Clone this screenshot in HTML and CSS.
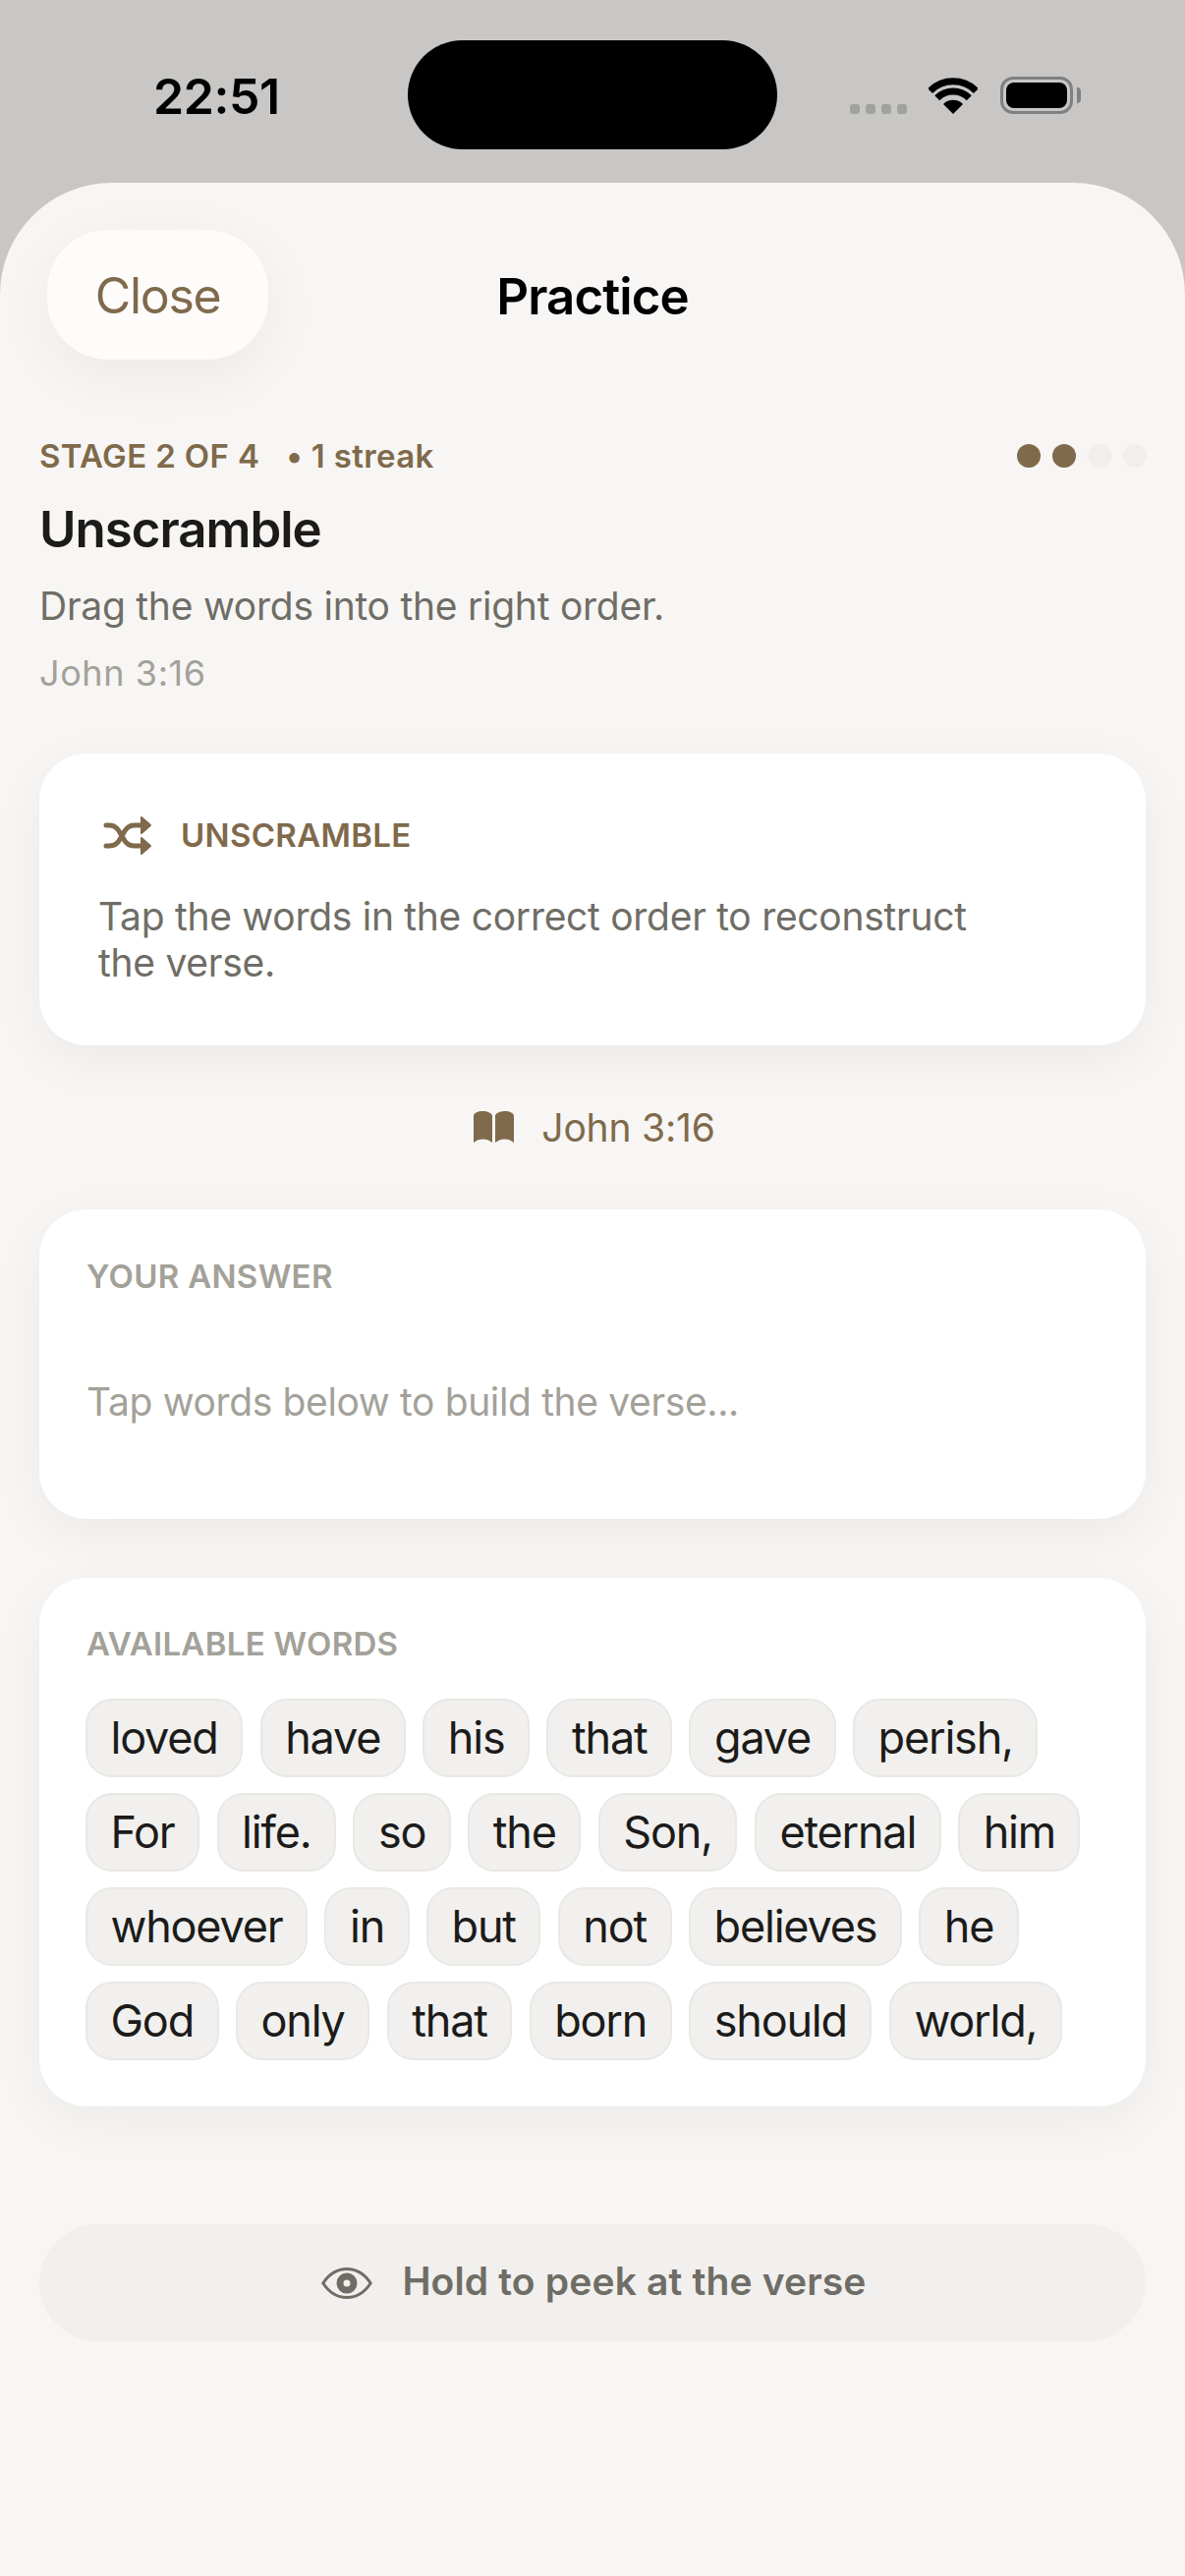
FILE: index.html
```html
<!DOCTYPE html>
<html lang="en">
<head>
  <meta charset="UTF-8">
  <meta name="viewport" content="width=device-width, initial-scale=1.0">
  <title>Practice</title>
  <link rel="stylesheet" href="styles.css">
</head>
<body>
  <div class="status-bar">
    <div class="time">22:51</div>
    <div class="island"></div>
    <div class="status-icons">
      <div class="signal"><span></span><span></span><span></span><span></span></div>
      <svg class="wifi" width="50" height="37" viewBox="0 0 50 37">
        <path d="M25 37 L15 27 A14 14 0 0 1 35 27 Z" fill="#000"/>
        <path d="M8.7 20.7 A23 23 0 0 1 41.3 20.7" fill="none" stroke="#000" stroke-width="7"/>
        <path d="M1.6 13.6 A33 33 0 0 1 48.4 13.6" fill="none" stroke="#000" stroke-width="7"/>
      </svg>
      <div class="battery"><div class="battery-fill"></div></div>
      <div class="battery-nub"></div>
    </div>
  </div>

  <div class="sheet">
    <div class="sheet-header">
      <button type="button" class="close-btn">Close</button>
      <div class="sheet-title">Practice</div>
    </div>

    <div class="content">
      <div class="stage-row">
        <div class="stage-label">STAGE 2 OF 4<span class="streak">• 1 streak</span></div>
        <div class="stage-dots">
          <span class="dot on"></span><span class="dot on"></span><span class="dot"></span><span class="dot"></span>
        </div>
      </div>
      <h1 class="title">Unscramble</h1>
      <p class="subtitle">Drag the words into the right order.</p>
      <p class="reference">John 3:16</p>

      <div class="card intro-card">
        <div class="intro-head">
          <svg class="shuffle" width="60" height="60" viewBox="0 0 60 60">
            <path d="M8 20 H11 C19 20 21 26 24 31 C27 36 29 41 37 41 H44" fill="none" stroke="#7f6a4b" stroke-width="5" stroke-linecap="round"/>
            <path d="M8 41 H11 C19 41 21 36 24 31 C27 26 29 20 37 20 H44" fill="none" stroke="#7f6a4b" stroke-width="5" stroke-linecap="round"/>
            <path d="M44 12 L53 20 L44 28 Z M44 33 L53 41 L44 49 Z" fill="#7f6a4b" stroke="#7f6a4b" stroke-width="2" stroke-linejoin="round"/>
          </svg>
          <span class="intro-label">UNSCRAMBLE</span>
        </div>
        <p class="intro-text">Tap the words in the correct order to reconstruct the verse.</p>
      </div>

      <div class="verse-ref">
        <svg width="41" height="32" viewBox="0 0 41 32">
          <path d="M0 5 C0 2 4 0 9.5 0 C14 0 19 2 19 5 V32 C16 29.5 13 28.5 9.5 28.5 C6 28.5 3 29.5 0 32 Z" fill="#7f6a4b"/>
          <path d="M41 5 C41 2 37 0 31.5 0 C27 0 22 2 22 5 V32 C25 29.5 28 28.5 31.5 28.5 C35 28.5 38 29.5 41 32 Z" fill="#7f6a4b"/>
        </svg>
        <span>John 3:16</span>
      </div>

      <div class="card answer-card">
        <div class="card-label">YOUR ANSWER</div>
        <p class="answer-hint">Tap words below to build the verse...</p>
      </div>

      <div class="card words-card">
        <div class="card-label">AVAILABLE WORDS</div>
        <div class="chips">
          <div class="chip-row">
            <span class="chip">loved</span><span class="chip">have</span><span class="chip">his</span><span class="chip">that</span><span class="chip">gave</span><span class="chip">perish,</span>
          </div>
          <div class="chip-row">
            <span class="chip">For</span><span class="chip">life.</span><span class="chip">so</span><span class="chip">the</span><span class="chip">Son,</span><span class="chip">eternal</span><span class="chip">him</span>
          </div>
          <div class="chip-row">
            <span class="chip">whoever</span><span class="chip">in</span><span class="chip">but</span><span class="chip">not</span><span class="chip">believes</span><span class="chip">he</span>
          </div>
          <div class="chip-row">
            <span class="chip">God</span><span class="chip">only</span><span class="chip">that</span><span class="chip">born</span><span class="chip">should</span><span class="chip">world,</span>
          </div>
        </div>
      </div>

      <button type="button" class="peek-btn">
        <svg width="52" height="32" viewBox="0 0 52 32">
          <path d="M1.8 16 C8 6.5 16 1.5 26 1.5 C36 1.5 44 6.5 50.2 16 C44 25.5 36 30.5 26 30.5 C16 30.5 8 25.5 1.8 16 Z" fill="none" stroke="#6f6d66" stroke-width="3"/>
          <circle cx="26" cy="16" r="7" fill="none" stroke="#6f6d66" stroke-width="7"/>
        </svg>
        <span>Hold to peek at the verse</span>
      </button>
    </div>
  </div>
</body>
</html>
```

FILE: styles.css
```css
* {
  box-sizing: border-box;
}
body {
  margin: 0;
  height: 2622px;
  display: flex;
  flex-direction: column;
  overflow: hidden;
  background-color: #c8c7c5;
  font-family: Inter, "Noto Sans", sans-serif;
  color: #1c1b1a;
}
h1, p {
  margin: 0;
}

/* status bar */
.status-bar {
  height: 186px;
  flex-shrink: 0;
  display: grid;
  grid-template-columns: 415px 376px 1fr;
}
.time {
  padding: 68px 0 0 156px;
  font-size: 50px;
  line-height: 60px;
  font-weight: 600;
  letter-spacing: -0.4px;
  color: #000;
}
.island {
  margin-top: 41px;
  height: 111px;
  border-radius: 56px;
  background-color: #000;
}
.status-icons {
  display: flex;
  align-items: flex-end;
  height: 116px;
  padding-left: 74px;
}
.signal {
  display: flex;
  gap: 6px;
  margin-right: 22px;
}
.signal span {
  width: 10px;
  height: 10px;
  border-radius: 3px;
  background-color: #a1a19f;
}
.wifi {
  display: block;
  margin-right: 23px;
}
.battery {
  width: 74px;
  height: 38px;
  padding: 3px;
  border: 3px solid #808080;
  border-radius: 13px;
}
.battery-fill {
  height: 100%;
  border-radius: 8px;
  background-color: #000;
}
.battery-nub {
  width: 4px;
  height: 16px;
  margin: 0 0 11px 4px;
  border-radius: 0 4px 4px 0;
  background-color: #808080;
}

/* sheet */
.sheet {
  flex: 1;
  background-color: #f7f6f4;
  border-radius: 114px 114px 0 0;
}
.sheet-header {
  display: grid;
  grid-template-columns: 1fr auto 1fr;
  align-items: center;
  padding: 48px 48px 0;
}
.close-btn {
  justify-self: start;
  width: 225px;
  height: 132px;
  padding: 2px 0 0;
  border: none;
  border-radius: 62px;
  background-color: #fdfcfa;
  box-shadow: 0 16px 60px rgba(0, 0, 0, 0.05);
  font-family: inherit;
  font-size: 50px;
  letter-spacing: -1.3px;
  color: #7f6a4b;
}
.sheet-title {
  padding-top: 2px;
  font-size: 51px;
  font-weight: 600;
  letter-spacing: -0.9px;
  color: #000;
}
.content {
  padding: 0 40px;
}

/* heading block */
.stage-row {
  display: flex;
  justify-content: space-between;
  align-items: center;
  margin-top: 78px;
  height: 40px;
}
.stage-label {
  font-size: 33px;
  line-height: 40px;
  font-weight: 600;
  letter-spacing: 0.35px;
  color: #7f6a4b;
}
.streak {
  margin-left: 27px;
}
.stage-dots {
  display: flex;
  gap: 12px;
  margin-right: -1px;
}
.dot {
  width: 24px;
  height: 24px;
  border-radius: 50%;
  background-color: #f0efed;
}
.dot.on {
  background-color: #7f6a4b;
}
.title {
  margin-top: 25px;
  font-size: 51px;
  line-height: 60px;
  font-weight: 600;
  letter-spacing: -1px;
}
.subtitle {
  margin-top: 23px;
  font-size: 39px;
  line-height: 50px;
  letter-spacing: -0.25px;
  color: #6f6d66;
}
.reference {
  margin-top: 21px;
  font-size: 36px;
  line-height: 44px;
  letter-spacing: 0.6px;
  color: #a3a199;
}

/* cards */
.card {
  background-color: #fff;
  border-radius: 48px;
  box-shadow: 0 14px 52px rgba(0, 0, 0, 0.05);
}
.card-label {
  font-size: 33px;
  line-height: 40px;
  font-weight: 600;
  letter-spacing: 0.3px;
  color: #a3a199;
}
.intro-card {
  margin-top: 60px;
  padding: 63px 60px 61px;
}
.intro-head {
  display: flex;
  align-items: center;
  gap: 24px;
  height: 40px;
}
.intro-label {
  font-size: 33px;
  font-weight: 600;
  letter-spacing: 0.3px;
  color: #7f6a4b;
}
.intro-text {
  margin-top: 40px;
  padding-right: 100px;
  font-size: 39px;
  line-height: 46.5px;
  letter-spacing: -0.28px;
  color: #6f6d66;
}
.verse-ref {
  display: flex;
  justify-content: center;
  align-items: center;
  gap: 28px;
  margin-top: 58px;
  padding-left: 4px;
  height: 50px;
  font-size: 39px;
  letter-spacing: -0.2px;
  color: #7f6a4b;
}
.answer-card {
  margin-top: 59px;
  padding: 48px 48px 94px;
}
.answer-hint {
  margin-top: 83px;
  font-size: 39px;
  line-height: 50px;
  letter-spacing: -0.36px;
  color: #a3a199;
}
.words-card {
  margin-top: 60px;
  padding: 47px 48px;
}
.chips {
  display: flex;
  flex-direction: column;
  gap: 16px;
  margin: 36px 0 0 -1px;
}
.chip-row {
  display: flex;
  gap: 17.5px;
}
.chip {
  height: 80px;
  padding: 0 23.5px;
  border: 2px solid #e9e8e5;
  border-radius: 27px;
  background-color: #f1f0ee;
  font-size: 45px;
  line-height: 76px;
  letter-spacing: -1.2px;
}
.peek-btn {
  display: flex;
  justify-content: center;
  align-items: center;
  gap: 30px;
  width: 100%;
  height: 119px;
  margin-top: 120px;
  padding: 0 0 0 3px;
  border: none;
  border-radius: 60px;
  background-color: #f1f0ee;
  font-family: inherit;
  font-size: 39px;
  font-weight: 600;
  letter-spacing: 0.15px;
  color: #6f6d66;
}
.peek-btn span {
  margin-bottom: 5px;
}
```
